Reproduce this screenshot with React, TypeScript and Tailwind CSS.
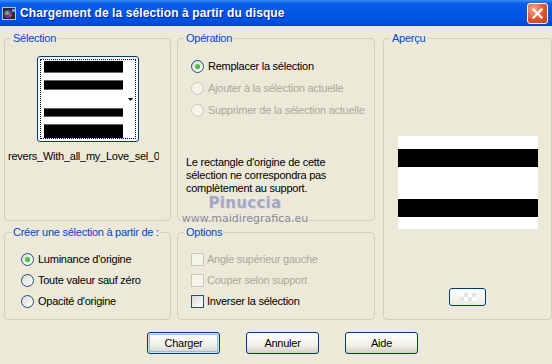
import React from "react";

const font = "font-['Liberation_Sans',Arial,sans-serif] tracking-[-0.25px]";

type GroupProps = {
  title: string;
  className?: string;
  children?: React.ReactNode;
};

const Group = ({ title, className = "", children }: GroupProps) => (
  <fieldset
    className={`border border-[#D0D0BF] rounded-[4px] min-w-0 ${className}`}
  >
    <legend className="ml-[6px] px-[2px] text-[#0046D5] text-[11px] leading-[13px]">
      {title}
    </legend>
    {children}
  </fieldset>
);

const Radio = ({
  label,
  checked,
  disabled,
}: {
  label: string;
  checked?: boolean;
  disabled?: boolean;
}) => (
  <div className="flex items-center h-[13px] gap-[4px]">
    <span
      className={`size-[13px] rounded-full border flex items-center justify-center ${
        disabled
          ? "border-[#CAC8BB] bg-[#F5F4EA]"
          : "border-[#1C5180] bg-[linear-gradient(135deg,#DCD9CF,#FFFFFF)]"
      }`}
    >
      {checked && (
        <span className="size-[5px] rounded-full bg-[radial-gradient(circle_at_35%_35%,#55D655,#21A121)]" />
      )}
    </span>
    <span
      className={`text-[11px] leading-[13px] whitespace-nowrap ${
        disabled ? "text-[#ACA899]" : "text-black"
      }`}
    >
      {label}
    </span>
  </div>
);

const Check = ({ label, disabled }: { label: string; disabled?: boolean }) => (
  <div className="flex items-center h-[13px] gap-[3px]">
    <span
      className={`size-[13px] border ${
        disabled
          ? "border-[#CAC8BB] bg-[#F5F4EA]"
          : "border-[#1C5180] bg-[linear-gradient(135deg,#DCD9CF,#FFFFFF)]"
      }`}
    />
    <span
      className={`text-[11px] leading-[13px] whitespace-nowrap ${
        disabled ? "text-[#ACA899]" : "text-black"
      }`}
    >
      {label}
    </span>
  </div>
);

const XpButton = ({ label, isDefault }: { label: string; isDefault?: boolean }) => (
  <button
    className={`w-[73px] h-[22px] rounded-[3px] border border-[#003C74] text-[11px] text-black bg-[linear-gradient(to_bottom,#FFFFFF,#F0F0EA_60%,#D6D0C5)] ${
      isDefault ? "shadow-[inset_0_0_0_1px_#CCE1FF,inset_0_0_0_2px_#99B9F1]" : ""
    }`}
  >
    {label}
  </button>
);

const Thumb = () => (
  <div className="mx-auto w-[102px] h-[86px] border border-[#003C74] rounded-[3px] bg-white p-[2px]">
    <div className="h-full border border-dotted border-black flex relative overflow-hidden">
      <div className="ml-[3px] w-[79px] flex flex-col pt-[1px]">
        <div className="h-[12px] bg-black border-b border-[#666]" />
        <div className="h-[8px]" />
        <div className="h-[10px] bg-black border-y border-[#666]" />
        <div className="h-[18px]" />
        <div className="h-[9px] bg-black border-y border-[#666]" />
        <div className="h-[8px]" />
        <div className="h-[14px] bg-black border-t border-[#666]" />
      </div>
      <div className="flex-1 flex items-center justify-end pr-[2px]">
        <svg width="5" height="3" viewBox="0 0 5 3">
          <path d="M0 0H5L2.5 3Z" fill="#000" />
        </svg>
      </div>
    </div>
  </div>
);

const App = () => {
  return (
    <div
      className={`${font} relative w-[552px] h-[364px] bg-[#ECE9D8] overflow-hidden flex flex-col`}
    >
      {/* title bar */}
      <div className="h-[26px] flex items-center bg-[linear-gradient(to_bottom,#3A8CF7_0%,#0A5EEB_14%,#0055E5_50%,#0050E0_85%,#003DCB_100%)]">
        <svg className="ml-[2px]" width="15" height="15" viewBox="0 0 15 15">
          <rect x="0.5" y="1.5" width="13" height="12" fill="#2A2A2A" stroke="#B8C4D8" />
          <circle cx="6" cy="8" r="4" fill="#7A2BB5" />
          <circle cx="5" cy="7" r="2" fill="#3BD16A" />
          <circle cx="8" cy="9" r="1.5" fill="#E0443A" />
          <rect x="10" y="3" width="3" height="3" fill="#4FA3FF" />
        </svg>
        <span className="ml-[3px] text-white font-bold text-[12px] tracking-[0.1px] [text-shadow:1px_1px_0_#0A1E8C]">
          Chargement de la sélection à partir du disque
        </span>
        <div className="ml-auto mr-[4px] size-[21px] rounded-[3px] border border-white bg-[radial-gradient(circle_at_30%_25%,#F2A58C,#E0552F_55%,#C23A19)] flex items-center justify-center">
          <svg width="11" height="11" viewBox="0 0 11 11">
            <path d="M1.5 1.5L9.5 9.5M9.5 1.5L1.5 9.5" stroke="#fff" strokeWidth="2.2" strokeLinecap="square" />
          </svg>
        </div>
      </div>

      {/* body */}
      <div className="flex pt-[6px] pl-[4px]">
        <div className="w-[167px] flex flex-col gap-[5px]">
          <Group title="Sélection" className="h-[189px]">
            <div className="mt-[11px]">
              <Thumb />
            </div>
            <div className="mt-[8px] ml-[3px] w-[151px] overflow-hidden whitespace-nowrap text-[11px] leading-[13px] text-black">
              revers_With_all_my_Love_sel_0
            </div>
          </Group>
          <Group title="Créer une sélection à partir de :" className="h-[94px]">
            <div className="mt-[14px] pl-[16px] flex flex-col gap-[8px]">
              <Radio label="Luminance d'origine" checked />
              <Radio label="Toute valeur sauf zéro" />
              <Radio label="Opacité d'origine" />
            </div>
          </Group>
        </div>

        <div className="ml-[6px] w-[198px] flex flex-col gap-[5px]">
          <Group title="Opération" className="h-[189px]">
            <div className="mt-[15px] pl-[13px] flex flex-col gap-[9px]">
              <Radio label="Remplacer la sélection" checked />
              <Radio label="Ajouter à la sélection actuelle" disabled />
              <Radio label="Supprimer de la sélection actuelle" disabled />
            </div>
            <p className="mt-[39px] pl-[8px] text-[11px] leading-[13px] text-black">
              Le rectangle d'origine de cette
              <br />
              sélection ne correspondra pas
              <br />
              complètement au support.
            </p>
          </Group>
          <Group title="Options" className="h-[94px]">
            <div className="mt-[14px] pl-[13px] flex flex-col gap-[8px]">
              <Check label="Angle supérieur gauche" disabled />
              <Check label="Couper selon support" disabled />
              <Check label="Inverser la sélection" />
            </div>
          </Group>
        </div>

        <div className="ml-[8px] w-[169px]">
          <Group title="Aperçu" className="h-[288px] flex flex-col">
            <div className="mt-[91px] mx-auto w-[140px] h-[93px] bg-white flex flex-col">
              <div className="h-[13px]" />
              <div className="h-[18px] bg-black" />
              <div className="h-[32px]" />
              <div className="h-[18px] bg-black" />
            </div>
            <div className="mt-[59px] mx-auto w-[37px] h-[18px] rounded-[3px] border border-[#003C74] bg-[linear-gradient(to_bottom,#FFFFFF,#ECEBE6)] flex items-center justify-center">
              <div className="w-[16px] h-[8px] bg-[repeating-conic-gradient(#E4E4E4_0_25%,#FFFFFF_0_50%)] bg-[length:8px_8px]" />
            </div>
          </Group>
        </div>
      </div>

      {/* buttons */}
      <div className="mt-[12px] pl-[147px] flex gap-[26px]">
        <XpButton label="Charger" isDefault />
        <XpButton label="Annuler" />
        <XpButton label="Aide" />
      </div>

      {/* watermark */}
      <div className="absolute left-[185px] top-[194px] w-[120px] flex flex-col items-center pointer-events-none">
        <span className="font-['DejaVu_Sans',sans-serif] font-bold text-[15px] leading-[18px] text-[#A4A8C2] tracking-[0.3px] [text-shadow:1px_1px_0_#D8D8E8]">
          Pinuccia
        </span>
        <span className="font-['DejaVu_Sans',sans-serif] text-[11px] leading-[13px] text-[#85858F] tracking-[0px] [text-shadow:0_0_1px_#fff]">
          www.maidiregrafica.eu
        </span>
      </div>
    </div>
  );
};

export default App;
